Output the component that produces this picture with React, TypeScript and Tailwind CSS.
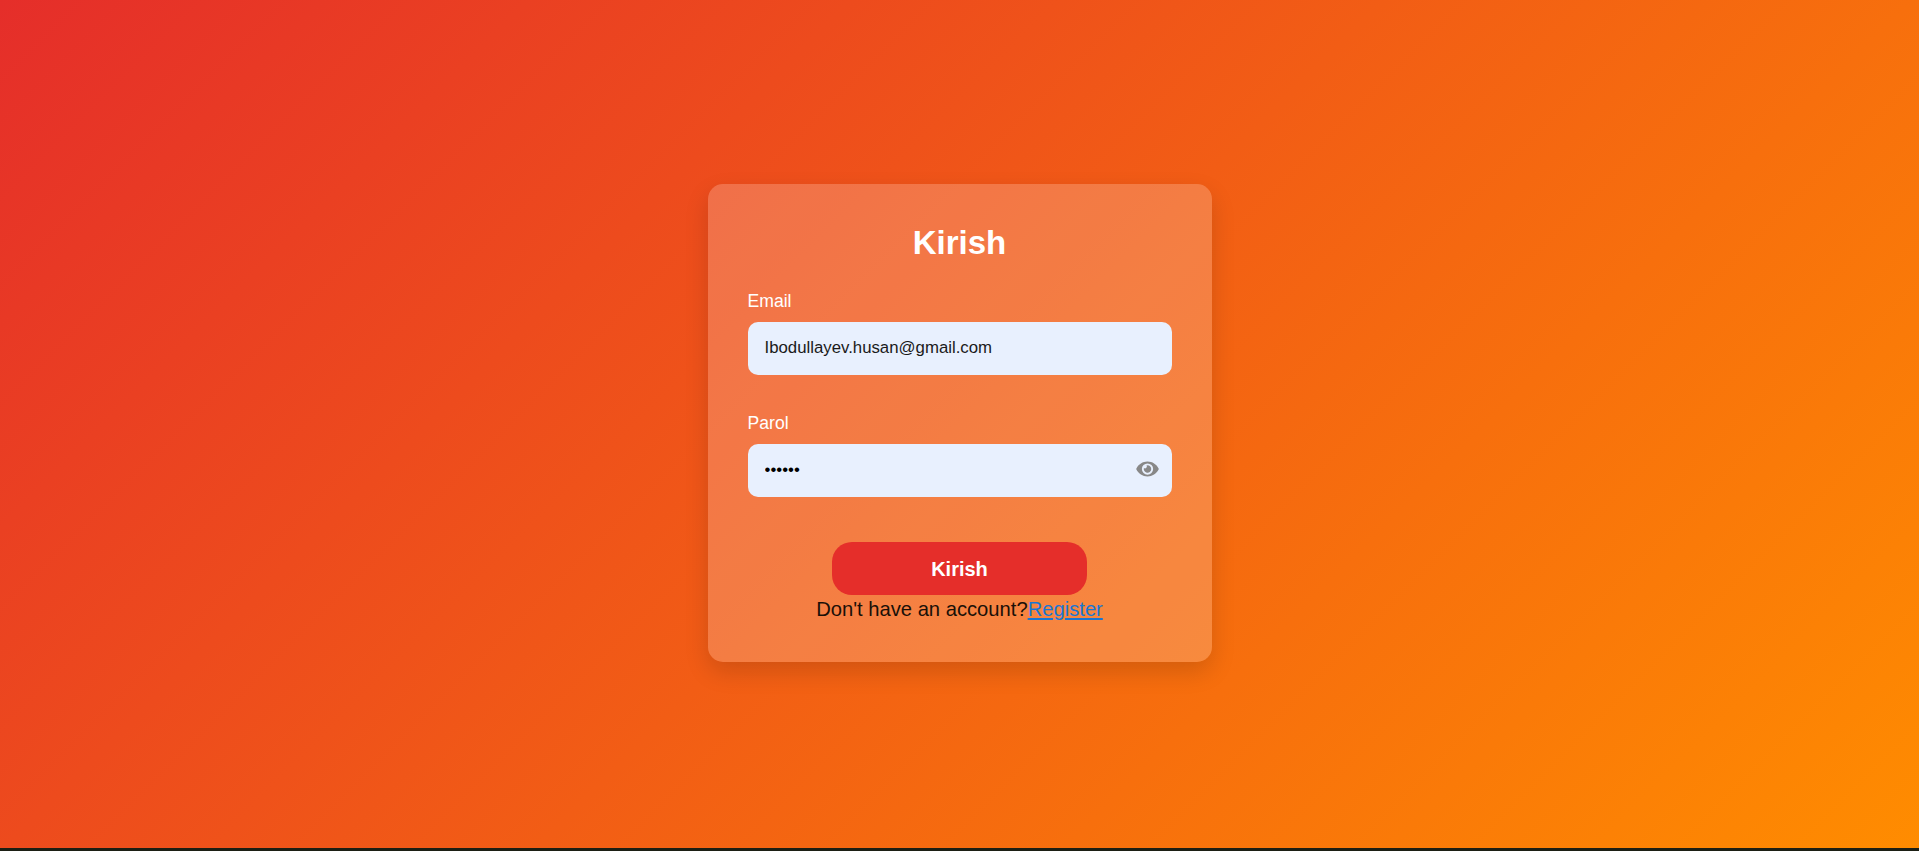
import { useState } from 'react';
import { FaEye } from 'react-icons/fa';

const sans = "font-['Liberation_Sans',Arial,sans-serif]";

export default function App() {
  const [email, setEmail] = useState('Ibodullayev.husan@gmail.com');
  const [password, setPassword] = useState('123456');
  const [show, setShow] = useState(false);

  return (
    <div className={`${sans} min-h-[851px] bg-[#1c1f14]`}>
      <div className="flex h-[848px] items-center justify-center bg-[linear-gradient(135deg,#e52e2a,#ff8c00)] pb-[2px]">
        <form className="w-[504px] rounded-[15px] bg-white/20 p-10 shadow-[0_10px_25px_rgba(0,0,0,0.14)]">
          <h2 className="mb-[30px] text-center text-[33px] leading-[37px] font-bold text-white">Kirish</h2>

          <div className="mb-[38px]">
            <label className="mb-[11px] block text-[17.6px] leading-5 text-white">Email</label>
            <input
              type="email"
              value={email}
              onChange={(e) => setEmail(e.target.value)}
              className="block h-[53px] w-full rounded-[10px] bg-[#e8f0fe] px-[17px] pb-[1px] text-[16.8px] text-[#1a1a1a] outline-none"
            />
          </div>

          <div className="mb-[45px]">
            <label className="mb-[11px] block text-[17.6px] leading-5 text-white">Parol</label>
            <div className="relative">
              <input
                type={show ? 'text' : 'password'}
                value={password}
                onChange={(e) => setPassword(e.target.value)}
                className="block h-[53px] w-full rounded-[10px] bg-[#e8f0fe] px-[17px] pb-[2px] text-[16.8px] text-black outline-none"
              />
              <button
                type="button"
                onClick={() => setShow(!show)}
                className="absolute top-[25px] right-[13px] -translate-y-1/2 text-[#888]"
              >
                <FaEye className="h-5 w-[23px]" />
              </button>
            </div>
          </div>

          <button
            type="submit"
            className="mx-auto block h-[53px] w-[255px] rounded-[20px] bg-[#e52e2a] text-xl font-bold text-white"
          >
            Kirish
          </button>
          <p className="pt-[2px] text-center text-[20.2px] leading-[25px] text-[#1a1008]">
            Don't have an account?
            <a href="#" className="text-[#1976d2] underline">Register</a>
          </p>
        </form>
      </div>
    </div>
  );
}
